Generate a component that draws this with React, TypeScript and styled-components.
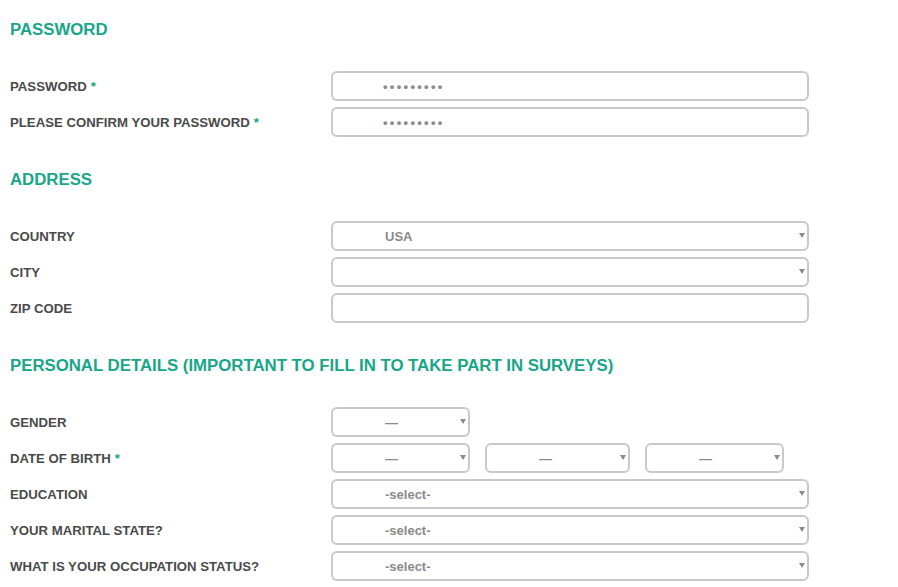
import React from 'react'
import styled, { createGlobalStyle } from 'styled-components'

const GlobalStyle = createGlobalStyle`
  * {
    box-sizing: border-box;
  }
  body {
    margin: 0;
    background: #ffffff;
    font-family: 'Liberation Sans', Arial, sans-serif;
  }
`

const GREEN = '#17a687'

const Page = styled.form`
  padding: 19px 10px;
`

const Section = styled.section`
  & + & {
    margin-top: 32px;
  }
`

const SectionTitle = styled.h2`
  margin: 0 0 31px;
  padding-top: 1px;
  font-size: 16.8px;
  line-height: 20px;
  font-weight: 700;
  color: ${GREEN};
  text-transform: uppercase;
`

const Fields = styled.div`
  display: flex;
  flex-direction: column;
  gap: 6px;
`

const Row = styled.div`
  display: grid;
  grid-template-columns: 321px 478px;
  align-items: center;
  height: 30px;
`

const Label = styled.label`
  font-size: 13.2px;
  font-weight: 700;
  color: #4a4a4a;
  text-transform: uppercase;
  white-space: nowrap;
`

const Req = styled.span`
  margin-left: 4px;
  color: ${GREEN};
`

const TextInput = styled.input`
  width: 100%;
  height: 30px;
  border: 2px solid #c9c9c9;
  border-radius: 6px;
  padding: 0 12px 0 50px;
  font-family: 'Liberation Sans', Arial, sans-serif;
  font-size: 13px;
  font-weight: 700;
  color: #8a8a8a;
  letter-spacing: ${({ type }) => (type === 'password' ? '2.3px' : 'normal')};
  background: #ffffff;
  outline: none;
`

const SelectWrap = styled.div<{ $width?: number }>`
  position: relative;
  width: ${({ $width }) => ($width ? `${$width}px` : '100%')};
  flex: none;
`

const Select = styled.select`
  appearance: none;
  width: 100%;
  height: 30px;
  border: 2px solid #c9c9c9;
  border-radius: 6px;
  padding: 0 18px 0 52px;
  font-family: 'Liberation Sans', Arial, sans-serif;
  font-size: 13px;
  font-weight: 700;
  color: #8a8a8a;
  background: #ffffff;
  outline: none;
`

const Arrow = styled.svg`
  position: absolute;
  right: 4px;
  top: 12px;
  width: 6px;
  height: 5px;
  pointer-events: none;
`

const DateGroup = styled.div`
  display: flex;
  gap: 15px;
`

function Dropdown({ width, value, options }: { width?: number; value: string; options?: string[] }) {
  const list = options ?? [value]
  return (
    <SelectWrap $width={width}>
      <Select defaultValue={value}>
        {list.map((o) => (
          <option key={o} value={o}>
            {o}
          </option>
        ))}
      </Select>
      <Arrow viewBox="0 0 6 5">
        <path d="M0 0 H6 L3 5 Z" fill="#8a8a8a" />
      </Arrow>
    </SelectWrap>
  )
}

export default function App() {
  return (
    <>
      <GlobalStyle />
      <Page onSubmit={(e) => e.preventDefault()}>
        <Section>
          <SectionTitle>Password</SectionTitle>
          <Fields>
            <Row>
              <Label>
                Password<Req>*</Req>
              </Label>
              <TextInput type="password" defaultValue="123456789" />
            </Row>
            <Row>
              <Label>
                Please confirm your password<Req>*</Req>
              </Label>
              <TextInput type="password" defaultValue="123456789" />
            </Row>
          </Fields>
        </Section>

        <Section>
          <SectionTitle>Address</SectionTitle>
          <Fields>
            <Row>
              <Label>Country</Label>
              <Dropdown value="USA" options={['USA', 'Canada', 'Mexico']} />
            </Row>
            <Row>
              <Label>City</Label>
              <Dropdown value="" />
            </Row>
            <Row>
              <Label>Zip code</Label>
              <TextInput type="text" />
            </Row>
          </Fields>
        </Section>

        <Section>
          <SectionTitle>Personal details (important to fill in to take part in surveys)</SectionTitle>
          <Fields>
            <Row>
              <Label>Gender</Label>
              <Dropdown width={139} value="—" options={['—', 'Male', 'Female']} />
            </Row>
            <Row>
              <Label>
                Date of birth<Req>*</Req>
              </Label>
              <DateGroup>
                <Dropdown width={139} value="—" />
                <Dropdown width={145} value="—" />
                <Dropdown width={139} value="—" />
              </DateGroup>
            </Row>
            <Row>
              <Label>Education</Label>
              <Dropdown value="-select-" />
            </Row>
            <Row>
              <Label>Your marital state?</Label>
              <Dropdown value="-select-" />
            </Row>
            <Row>
              <Label>What is your occupation status?</Label>
              <Dropdown value="-select-" />
            </Row>
          </Fields>
        </Section>
      </Page>
    </>
  )
}
